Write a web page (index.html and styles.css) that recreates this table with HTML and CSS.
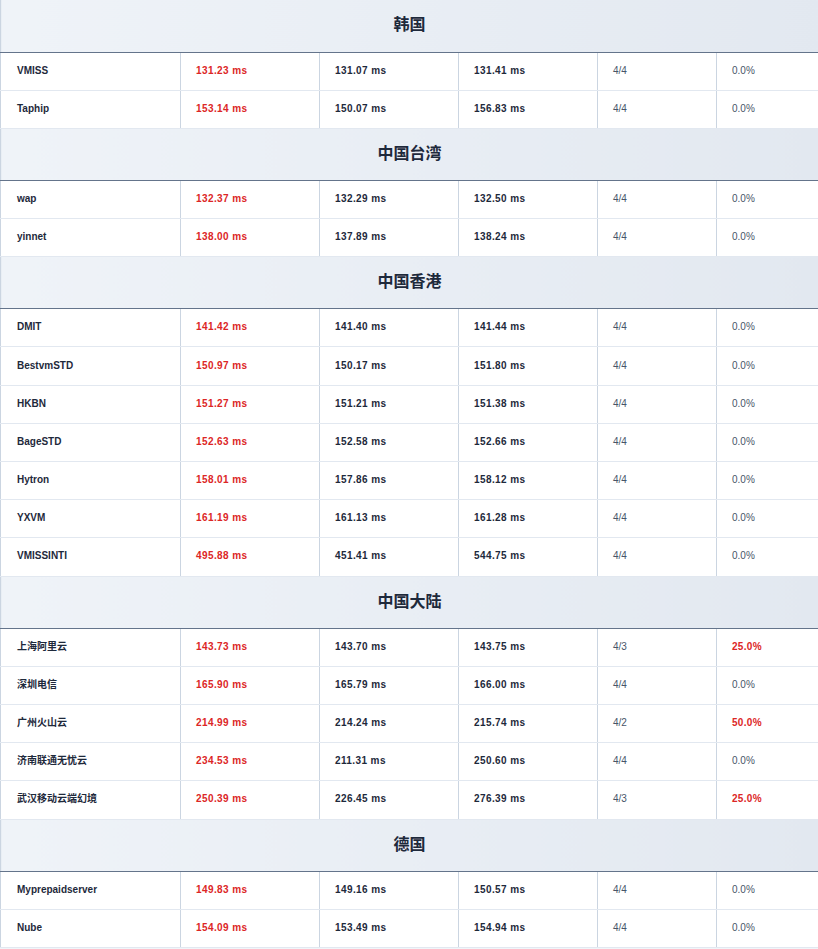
FILE: index.html
```html
<!DOCTYPE html>
<html lang="zh">
<head>
<meta charset="utf-8">
<title>Ping</title>
<link rel="stylesheet" href="styles.css">
</head>
<body>
<table class="ping">
<colgroup>
<col class="c-name"><col class="c-num"><col class="c-num"><col class="c-num"><col class="c-recv"><col class="c-loss">
</colgroup>
<tbody>
<tr class="sec"><th colspan="6">韩国</th></tr>
<tr><td class="name">VMISS</td><td class="red">131.23 ms</td><td class="num">131.07 ms</td><td class="num">131.41 ms</td><td class="recv">4/4</td><td class="loss">0.0%</td></tr>
<tr><td class="name">Taphip</td><td class="red">153.14 ms</td><td class="num">150.07 ms</td><td class="num">156.83 ms</td><td class="recv">4/4</td><td class="loss">0.0%</td></tr>

<tr class="sec"><th colspan="6">中国台湾</th></tr>
<tr><td class="name">wap</td><td class="red">132.37 ms</td><td class="num">132.29 ms</td><td class="num">132.50 ms</td><td class="recv">4/4</td><td class="loss">0.0%</td></tr>
<tr><td class="name">yinnet</td><td class="red">138.00 ms</td><td class="num">137.89 ms</td><td class="num">138.24 ms</td><td class="recv">4/4</td><td class="loss">0.0%</td></tr>

<tr class="sec"><th colspan="6">中国香港</th></tr>
<tr><td class="name">DMIT</td><td class="red">141.42 ms</td><td class="num">141.40 ms</td><td class="num">141.44 ms</td><td class="recv">4/4</td><td class="loss">0.0%</td></tr>
<tr><td class="name">BestvmSTD</td><td class="red">150.97 ms</td><td class="num">150.17 ms</td><td class="num">151.80 ms</td><td class="recv">4/4</td><td class="loss">0.0%</td></tr>
<tr><td class="name">HKBN</td><td class="red">151.27 ms</td><td class="num">151.21 ms</td><td class="num">151.38 ms</td><td class="recv">4/4</td><td class="loss">0.0%</td></tr>
<tr><td class="name">BageSTD</td><td class="red">152.63 ms</td><td class="num">152.58 ms</td><td class="num">152.66 ms</td><td class="recv">4/4</td><td class="loss">0.0%</td></tr>
<tr><td class="name">Hytron</td><td class="red">158.01 ms</td><td class="num">157.86 ms</td><td class="num">158.12 ms</td><td class="recv">4/4</td><td class="loss">0.0%</td></tr>
<tr><td class="name">YXVM</td><td class="red">161.19 ms</td><td class="num">161.13 ms</td><td class="num">161.28 ms</td><td class="recv">4/4</td><td class="loss">0.0%</td></tr>
<tr><td class="name">VMISSINTI</td><td class="red">495.88 ms</td><td class="num">451.41 ms</td><td class="num">544.75 ms</td><td class="recv">4/4</td><td class="loss">0.0%</td></tr>

<tr class="sec"><th colspan="6">中国大陆</th></tr>
<tr><td class="name">上海阿里云</td><td class="red">143.73 ms</td><td class="num">143.70 ms</td><td class="num">143.75 ms</td><td class="recv">4/3</td><td class="loss bad">25.0%</td></tr>
<tr><td class="name">深圳电信</td><td class="red">165.90 ms</td><td class="num">165.79 ms</td><td class="num">166.00 ms</td><td class="recv">4/4</td><td class="loss">0.0%</td></tr>
<tr><td class="name">广州火山云</td><td class="red">214.99 ms</td><td class="num">214.24 ms</td><td class="num">215.74 ms</td><td class="recv">4/2</td><td class="loss bad">50.0%</td></tr>
<tr><td class="name">济南联通无忧云</td><td class="red">234.53 ms</td><td class="num">211.31 ms</td><td class="num">250.60 ms</td><td class="recv">4/4</td><td class="loss">0.0%</td></tr>
<tr><td class="name">武汉移动云端幻境</td><td class="red">250.39 ms</td><td class="num">226.45 ms</td><td class="num">276.39 ms</td><td class="recv">4/3</td><td class="loss bad">25.0%</td></tr>

<tr class="sec"><th colspan="6">德国</th></tr>
<tr><td class="name">Myprepaidserver</td><td class="red">149.83 ms</td><td class="num">149.16 ms</td><td class="num">150.57 ms</td><td class="recv">4/4</td><td class="loss">0.0%</td></tr>
<tr><td class="name">Nube</td><td class="red">154.09 ms</td><td class="num">153.49 ms</td><td class="num">154.94 ms</td><td class="recv">4/4</td><td class="loss">0.0%</td></tr>
</tbody>
</table>
</body>
</html>
```
FILE: styles.css
```css
html, body {
  margin: 0;
  padding: 0;
  background: #f1f5f9;
}
body {
  font-family: "Liberation Sans", "Noto Sans CJK SC", sans-serif;
  color: #1e293b;
}
.ping {
  width: 818px;
  border-collapse: collapse;
  table-layout: fixed;
  background: #ffffff;
}
.c-name { width: 180px; }
.c-num { width: 139px; }
.c-recv { width: 119px; }
.c-loss { width: 102px; }

.sec th {
  box-sizing: border-box;
  height: 52px;
  padding: 0 0 5px 0;
  font-family: "Noto Sans CJK SC", sans-serif;
  font-size: 16px;
  font-weight: 700;
  color: #1e293b;
  text-align: center;
  vertical-align: middle;
  background: linear-gradient(90deg, #eff3f8 0%, #e2e8f0 100%);
  border-left: 1px solid #cbd5e1;
  border-right: 1px solid #cbd5e1;
  border-bottom: 1px solid #64748b;
  line-height: 20px;
}
td {
  box-sizing: border-box;
  height: 38.2px;
  padding: 0 0 1px 15px;
  font-size: 10px;
  line-height: 12px;
  vertical-align: middle;
  border-left: 1px solid #cbd5e1;
  border-right: 1px solid #cbd5e1;
  border-bottom: 1px solid #e2e8f0;
  white-space: nowrap;
}
.name {
  padding-left: 16px;
  font-weight: 700;
  color: #1e293b;
}
.red {
  color: #dc2626;
  font-weight: 700;
  letter-spacing: 0.4px;
}
.num {
  color: #1e293b;
  font-weight: 700;
  letter-spacing: 0.4px;
}
.recv {
  color: #475569;
  font-weight: 400;
}
.loss {
  color: #475569;
  font-weight: 400;
}
.loss.bad {
  color: #dc2626;
  font-weight: 700;
  letter-spacing: 0.3px;
}
```
